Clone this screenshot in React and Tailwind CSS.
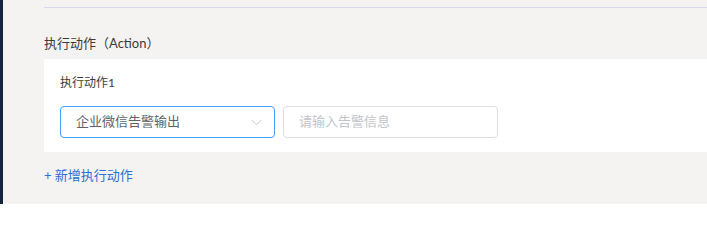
import React from "react";

export default function App() {
  const font = { fontFamily: 'Lato, "Noto Sans CJK SC", "Noto Sans", sans-serif' };
  return (
    <div className="flex w-full h-[204px] bg-[#f4f3f2] overflow-hidden" style={font}>
      <div className="w-[3px] h-full bg-[#16233f] shrink-0" />
      <div className="flex-1 pl-[41px]">
        <div className="mt-[7px] h-px bg-[#d8d9ec]" />
        <div className="mt-[25px] h-[20px] leading-[20px] text-[13px] text-[#3a3a3a]">执行动作（Action）</div>
        <div className="mt-[6px] bg-white pl-[16px] pt-[14px] pb-[14px]">
          <div className="h-[20px] leading-[20px] text-[12px] text-[#3a3a3a]">执行动作1</div>
          <div className="mt-[13px] flex gap-[8px]">
            <div className="w-[215px] h-[32px] border border-[#409eff] rounded-[4px] flex items-center justify-between pl-[15px] pr-[12px] text-[13px] text-[#606266]">
              <span>企业微信告警输出</span>
              <svg width="11" height="7" viewBox="0 0 11 7" fill="none">
                <path d="M0.5 0.8 L5.5 5.8 L10.5 0.8" stroke="#c0c4cc" strokeWidth="0.9" />
              </svg>
            </div>
            <div className="w-[215px] h-[32px] border border-[#dcdfe6] rounded-[4px] flex items-center pl-[15px] text-[13px] text-[#c0c4cc]">
              请输入告警信息
            </div>
          </div>
        </div>
        <div className="mt-[13px] h-[20px] leading-[20px] text-[13px] text-[#2a6fd6]">+ 新增执行动作</div>
      </div>
    </div>
  );
}
